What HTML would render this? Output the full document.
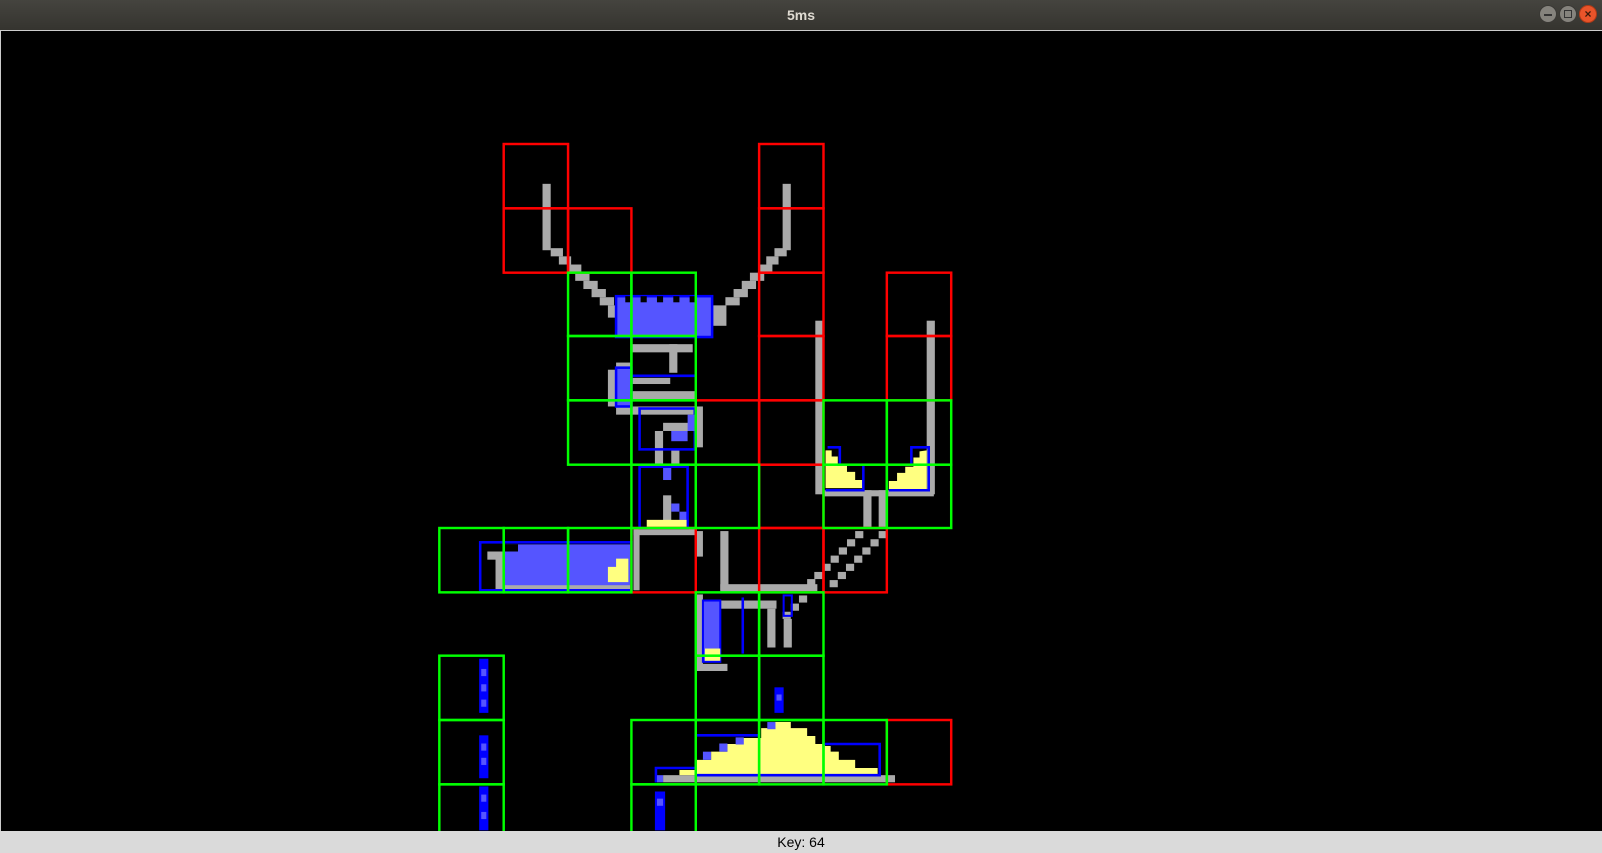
<!DOCTYPE html>
<html><head><meta charset="utf-8"><style>
html,body{margin:0;padding:0;width:1602px;height:853px;overflow:hidden;background:#000;font-family:"Liberation Sans",sans-serif}
#title{position:absolute;left:0;top:0;width:1602px;height:30px;background:linear-gradient(#45443f,#35342f);color:#dfdbd2;font-weight:bold;font-size:14px;text-align:center;line-height:30px}
.b{position:absolute;top:5px;width:18px;height:18px;border-radius:50%;background:#85837d;border:1px solid #3a3935;box-sizing:border-box}
#canvas{position:absolute;left:0;top:30px;width:1602px;height:801px;background:#000;border-left:1px solid #ccc;border-top:1px solid #ccc;box-sizing:border-box}
#status{position:absolute;left:0;top:831px;width:1602px;height:22px;background:#dadada;color:#000;font-size:14px;text-align:center;line-height:22px}
</style></head><body>
<div id="title">5ms
<div class="b" style="left:1539px"><div style="position:absolute;left:4px;top:8px;width:8px;height:1.5px;background:#333"></div></div>
<div class="b" style="left:1559px"><div style="position:absolute;left:4px;top:4px;width:8px;height:8px;border:1.5px solid #333;box-sizing:border-box"></div></div>
<div class="b" style="left:1579px;background:#e9542a;border-color:#b03a17;color:#3a1a0a;font-size:12px;line-height:16px;text-align:center">×</div>
</div>
<div id="canvas"></div>
<svg style="position:absolute;left:0;top:0" width="1602" height="853">
<g transform="scale(1.0217 1.0213)">
<g fill="#aaa">
<rect x="531" y="180" width="8" height="65"/>
<rect x="539" y="243" width="12" height="8"/><rect x="547" y="251" width="12" height="8"/><rect x="555" y="259" width="14" height="8"/><rect x="563" y="267" width="14" height="8"/><rect x="571" y="275" width="14" height="8"/><rect x="579" y="283" width="14" height="8"/><rect x="587" y="291" width="14" height="8"/><rect x="595" y="299" width="12" height="12"/>
<rect x="766" y="180" width="8" height="65"/>
<rect x="758" y="243" width="12" height="8"/><rect x="750" y="251" width="12" height="8"/><rect x="742" y="259" width="14" height="8"/><rect x="734" y="267" width="14" height="8"/><rect x="726" y="275" width="14" height="8"/><rect x="718" y="283" width="14" height="8"/><rect x="710" y="291" width="14" height="8"/><rect x="697" y="299" width="14" height="20"/>
<rect x="618" y="337" width="60" height="8"/><rect x="655" y="337" width="8" height="28"/><rect x="603" y="355" width="16" height="8"/><rect x="595" y="362" width="8" height="36"/><rect x="618" y="383" width="64" height="8"/><rect x="618" y="370" width="38" height="6"/>
<rect x="603" y="398" width="77" height="8"/><rect x="649" y="414" width="31" height="8"/><rect x="641" y="422" width="8" height="33"/><rect x="657" y="440" width="8" height="15"/><rect x="680" y="398" width="8" height="40"/>
<rect x="649" y="485" width="8" height="27"/>
<rect x="477" y="540" width="16" height="8"/><rect x="485" y="540" width="8" height="38"/><rect x="493" y="572" width="125" height="6"/>
<rect x="620" y="518" width="61" height="6"/><rect x="620" y="518" width="6" height="60"/>
<rect x="705" y="520" width="8" height="58"/><rect x="705" y="572" width="95" height="8"/><rect x="680" y="520" width="8" height="25"/>
<rect x="860" y="520" width="8" height="7"/><rect x="852" y="528" width="8" height="7"/><rect x="844" y="536" width="8" height="7"/><rect x="836" y="544" width="8" height="7"/><rect x="828" y="552" width="8" height="7"/><rect x="820" y="560" width="8" height="7"/><rect x="812" y="568" width="8" height="7"/>
<rect x="837" y="520" width="8" height="7"/><rect x="829" y="528" width="8" height="7"/><rect x="821" y="536" width="8" height="7"/><rect x="813" y="544" width="8" height="7"/><rect x="805" y="552" width="8" height="7"/><rect x="797" y="560" width="8" height="7"/><rect x="790" y="567" width="8" height="7"/><rect x="782" y="583" width="8" height="7"/><rect x="774" y="591" width="8" height="7"/><rect x="766" y="599" width="8" height="7"/>
<rect x="680" y="582" width="8" height="75"/><rect x="680" y="650" width="32" height="7"/><rect x="705" y="588" width="55" height="8"/><rect x="751" y="596" width="8" height="38"/><rect x="767" y="606" width="8" height="28"/>
<rect x="798" y="314" width="8" height="170"/><rect x="907" y="314" width="8" height="170"/>
<rect x="806" y="480" width="64" height="6"/><rect x="870" y="480" width="44" height="6"/><rect x="845" y="480" width="8" height="37"/><rect x="860" y="480" width="8" height="37"/>
<rect x="649" y="759" width="227" height="7"/>
</g>
<rect x="603" y="290" width="94" height="40" fill="#5555ff"/>
<rect x="603" y="290" width="94" height="40" fill="none" stroke="#00f" stroke-width="2.5"/>
<g fill="#000"><rect x="612" y="290" width="6" height="6"/><rect x="627" y="290" width="6" height="6"/><rect x="643" y="290" width="6" height="6"/><rect x="659" y="290" width="6" height="6"/><rect x="675" y="290" width="6" height="6"/></g>
<rect x="603" y="360" width="15" height="38" fill="#5555ff" stroke="#00f" stroke-width="2.5"/>
<line x1="618" y1="368" x2="680" y2="368" stroke="#00f" stroke-width="2.5"/>
<rect x="626" y="400" width="54" height="40" fill="none" stroke="#00f" stroke-width="2.5"/>
<g fill="#5555ff"><rect x="657" y="422" width="16" height="10"/><rect x="673" y="406" width="7" height="16"/><rect x="649" y="457" width="8" height="13"/><rect x="657" y="493" width="8" height="8"/><rect x="665" y="501" width="7" height="8"/></g>
<rect x="626" y="457" width="47" height="60" fill="none" stroke="#00f" stroke-width="2.5"/>
<rect x="633" y="509" width="39" height="8" fill="#ffff80"/>
<rect x="493" y="533" width="125" height="40" fill="#5555ff"/>
<rect x="470" y="531" width="148" height="47" fill="none" stroke="#00f" stroke-width="2.5"/>
<rect x="493" y="533" width="14" height="7" fill="#000"/>
<path d="M595 555h8v-8h12v23h-20z" fill="#ffff80"/>
<rect x="688" y="588" width="17" height="60" fill="#5555ff" stroke="#00f" stroke-width="2"/>
<rect x="690" y="635" width="15" height="12" fill="#ffff80"/>
<rect x="767" y="583" width="8" height="20" fill="none" stroke="#00f" stroke-width="2"/>
<line x1="727" y1="585" x2="727" y2="640" stroke="#00f" stroke-width="2.5"/>
<path d="M808 441h6v6h6v9h9v6h8v8h8v8h-37z" fill="#ffff80"/>
<path d="M810 438h12v17M845 456v24h-37" fill="none" stroke="#00f" stroke-width="2.5"/>
<path d="M907 441v38h-37v-8h8v-8h8v-6h8v-9h6v-6z" fill="#ffff80"/>
<path d="M892 456v-18h17v42h-39" fill="none" stroke="#00f" stroke-width="2.5"/>
<path d="M665 759V754H680V744H696V736H712V728.5H727V722.6H745V713H758.5V707H774V713H790V720.7H798V728.5H807.5V730.5H813V736H821V744H837V752H859V759z" fill="#ffff80"/>
<path d="M680 720H742M807 728.5H861V759H680" fill="none" stroke="#00f" stroke-width="2.5"/>
<path d="M681 752H642V766" fill="none" stroke="#00f" stroke-width="2.5"/>
<g fill="#5555ff"><rect x="688" y="736" width="8" height="8"/><rect x="704" y="728" width="8" height="8"/><rect x="720" y="722" width="8" height="7"/><rect x="751" y="707" width="8" height="7"/><rect x="643" y="759" width="6" height="7"/></g>
<g fill="#00f"><rect x="469" y="645" width="9" height="53"/><rect x="469" y="720" width="9" height="42"/><rect x="469" y="770" width="9" height="43"/><rect x="758" y="673" width="9" height="25"/><rect x="641" y="775" width="10" height="38"/></g>
<g fill="#5555ff"><rect x="471" y="655" width="5" height="7"/><rect x="471" y="670" width="5" height="7"/><rect x="471" y="685" width="5" height="7"/><rect x="471" y="728" width="5" height="7"/><rect x="471" y="742" width="5" height="7"/><rect x="471" y="778" width="5" height="7"/><rect x="471" y="795" width="5" height="7"/><rect x="760" y="680" width="5" height="6"/><rect x="643" y="782" width="6" height="7"/></g>
<g fill="none" stroke="#f00" stroke-width="2.4">
<rect x="493" y="141" width="63" height="63"/><rect x="493" y="204" width="63" height="63"/><rect x="556" y="204" width="62" height="63"/>
<rect x="743" y="141" width="63" height="63"/><rect x="743" y="204" width="63" height="63"/><rect x="743" y="267" width="63" height="62"/><rect x="743" y="329" width="63" height="63"/><rect x="743" y="392" width="63" height="63"/><rect x="743" y="455" width="63" height="62"/><rect x="743" y="517" width="63" height="63"/>
<rect x="868" y="267" width="63" height="62"/><rect x="868" y="329" width="63" height="63"/><rect x="681" y="392" width="62" height="63"/>
<rect x="618" y="517" width="63" height="63"/><rect x="806" y="517" width="62" height="63"/><rect x="868" y="705" width="63" height="63"/>
</g>
<g fill="none" stroke="#0f0" stroke-width="2.4">
<rect x="556" y="267" width="62" height="62"/><rect x="618" y="267" width="63" height="62"/><rect x="556" y="329" width="62" height="63"/><rect x="618" y="329" width="63" height="63"/><rect x="556" y="392" width="62" height="63"/><rect x="618" y="392" width="63" height="63"/>
<rect x="618" y="455" width="63" height="62"/><rect x="681" y="455" width="62" height="62"/>
<rect x="806" y="392" width="62" height="63"/><rect x="868" y="392" width="63" height="63"/><rect x="806" y="455" width="62" height="62"/><rect x="868" y="455" width="63" height="62"/>
<rect x="430" y="517" width="63" height="63"/><rect x="493" y="517" width="63" height="63"/><rect x="556" y="517" width="62" height="63"/>
<rect x="681" y="580" width="62" height="62"/><rect x="743" y="580" width="63" height="62"/><rect x="681" y="642" width="62" height="63"/><rect x="743" y="642" width="63" height="63"/>
<rect x="430" y="642" width="63" height="63"/><rect x="430" y="705" width="63" height="63"/><rect x="430" y="768" width="63" height="63"/>
<rect x="618" y="705" width="63" height="63"/><rect x="681" y="705" width="62" height="63"/><rect x="743" y="705" width="63" height="63"/><rect x="806" y="705" width="62" height="63"/><rect x="618" y="768" width="63" height="63"/>
</g>
</g>
</svg>
<div id="status">Key: 64</div>
</body></html>
